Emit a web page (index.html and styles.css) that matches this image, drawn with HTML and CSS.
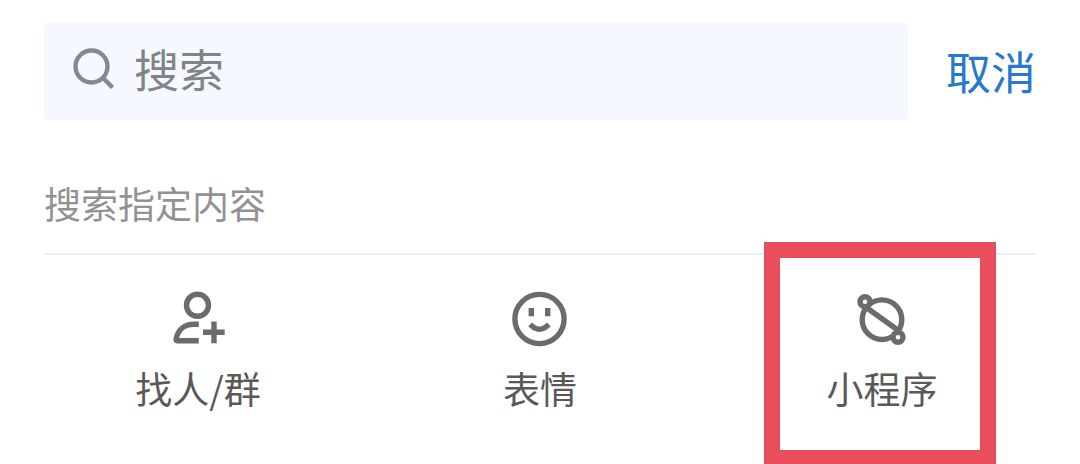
FILE: index.html
```html
<!DOCTYPE html>
<html lang="zh-CN">
<head>
<meta charset="utf-8">
<meta name="viewport" content="width=device-width, initial-scale=1">
<title>搜索</title>
<link rel="stylesheet" href="styles.css">
</head>
<body>
<main class="page">
  <form class="search" role="search">
    <label class="search-box">
      <svg class="search-icon" viewBox="0 0 44 44" aria-hidden="true">
        <circle cx="19.5" cy="19.5" r="16"/>
        <path d="M30 30L40.5 40.5"/>
      </svg>
      <input class="search-input" type="search" placeholder="搜索" aria-label="搜索">
    </label>
    <button class="cancel" type="button">取消</button>
  </form>
  <h2 class="heading">搜索指定内容</h2>
  <nav class="types">
    <a class="type" href="#people">
      <svg class="type-icon" viewBox="0 0 56 56" aria-hidden="true">
        <circle cx="27.5" cy="14.3" r="11"/>
        <path d="M28.8 33.3H23.5C14 33.3 8 39.5 6.2 47.5Q5.5 49.8 8 49.8H28.8M33 41.3H54.7M44 30.6V52.3"/>
      </svg>
      <span>找人/群</span>
    </a>
    <a class="type" href="#stickers">
      <svg class="type-icon" viewBox="0 0 56 56" aria-hidden="true">
        <circle cx="27.5" cy="28" r="24.6"/>
        <path d="M19.3 17V25.2M35.7 17V25.2M18.2 33.4Q27.5 43 36.8 33.4"/>
      </svg>
      <span>表情</span>
    </a>
    <a class="type marked" href="#mini-programs">
      <svg class="type-icon" viewBox="0 0 56 56" aria-hidden="true">
        <circle cx="28" cy="28.7" r="19.8"/>
        <circle class="moon" cx="11" cy="10.7" r="5"/>
        <circle class="moon" cx="44" cy="46.3" r="5"/>
        <path d="M11 15.5L45 40"/>
      </svg>
      <span>小程序</span>
    </a>
  </nav>
</main>
</body>
</html>
```
FILE: styles.css
```css
* {
  box-sizing: border-box;
}

body {
  margin: 0;
  background: #fff;
  font-family: "Noto Sans CJK SC", sans-serif;
  overflow: hidden;
}

.page {
  padding: 23px 44px 0;
}

.search {
  display: flex;
  align-items: center;
  gap: 38px;
}

.search-box {
  flex: 1;
  min-width: 0;
  display: flex;
  align-items: center;
  gap: 18px;
  padding: 13px 28px 19px;
  background: #f5f9ff;
  border-radius: 4px;
}

.search-icon {
  flex: none;
  width: 44px;
  height: 44px;
  fill: none;
  stroke: #85888c;
  stroke-width: 4.4;
}

.search-input {
  flex: 1;
  min-width: 0;
  height: 65px;
  padding: 0;
  border: 0;
  outline: 0;
  background: none;
  color: #333;
  font: 45px/64px "Noto Sans CJK SC", sans-serif;
}

.search-input::placeholder {
  color: #808387;
  opacity: 1;
}

.cancel {
  padding: 0 0 2px;
  border: 0;
  background: none;
  color: #2878d0;
  font: 45px/64px "Noto Sans CJK SC", sans-serif;
}

.heading {
  margin: 0;
  padding: 55px 0 22px;
  border-bottom: 2px solid #efefef;
  color: #929292;
  font-size: 37px;
  font-weight: 400;
  line-height: 56px;
}

.types {
  display: grid;
  grid-template-columns: repeat(3, 1fr);
  margin: 0 -17px;
}

.type {
  position: relative;
  display: flex;
  flex-direction: column;
  align-items: center;
  gap: 13px;
  padding: 36px 0 50px;
  color: #595959;
  font-size: 37px;
  line-height: 56px;
  text-decoration: none;
}

.type-icon {
  width: 56px;
  height: 56px;
  fill: none;
  stroke: #6b6b6b;
  stroke-width: 5.4;
}

.moon {
  fill: #fff;
}

.marked::after {
  content: "";
  position: absolute;
  inset: -13px 57px 0 53px;
  border: 16px solid #e94f5b;
}
```
